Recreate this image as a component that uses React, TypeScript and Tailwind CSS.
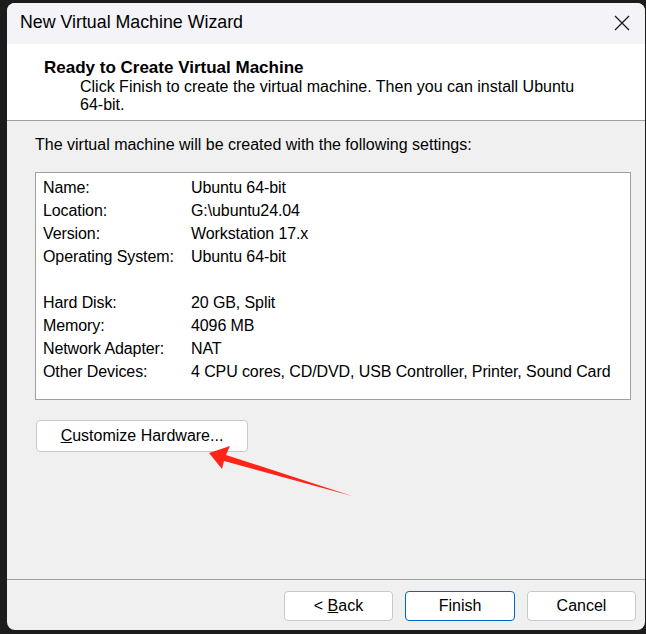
import React from "react";

const font = { fontFamily: '"Liberation Sans", Arial, sans-serif' };

const rows: [string, string][] = [
  ["Name:", "Ubuntu 64-bit"],
  ["Location:", "G:\\ubuntu24.04"],
  ["Version:", "Workstation 17.x"],
  ["Operating System:", "Ubuntu 64-bit"],
  ["", ""],
  ["Hard Disk:", "20 GB, Split"],
  ["Memory:", "4096 MB"],
  ["Network Adapter:", "NAT"],
  ["Other Devices:", "4 CPU cores, CD/DVD, USB Controller, Printer, Sound Card"],
];

export default function App() {
  return (
    <div
      className="relative w-[646px] h-[634px] bg-[#1c1c1c] overflow-hidden text-[#000]"
      style={font}
    >
      <div className="ml-[7px] mt-[3px] w-[638px] h-[627px] rounded-[8px] bg-[#f0f0f0] flex flex-col overflow-hidden">
        {/* Title bar */}
        <div className="h-[41px] shrink-0 bg-[#f3f3f8] flex items-center justify-between pl-[13px] pr-[14px]">
          <span className="text-[17.8px] leading-none pb-[1px]">New Virtual Machine Wizard</span>
          <svg width="18" height="18" viewBox="0 0 18 18" className="mt-[-1px]">
            <path d="M2 2 L16 16 M16 2 L2 16" stroke="#1a1a1a" strokeWidth="1.3" fill="none" />
          </svg>
        </div>
        {/* Header */}
        <div className="h-[77px] shrink-0 bg-white border-b border-[#a0a0a0] pl-[37px] pt-[13px]">
          <div className="text-[17px] font-bold leading-[21px]">Ready to Create Virtual Machine</div>
          <div className="pl-[36px] w-[540px] text-[16px] leading-[18px]">
            Click Finish to create the virtual machine. Then you can install Ubuntu 64-bit.
          </div>
        </div>
        {/* Body */}
        <div className="flex-1 flex flex-col pl-[28px] pr-[7px]">
          <div className="mt-[15px] text-[16px] leading-[18px]">
            The virtual machine will be created with the following settings:
          </div>
          <div className="mt-[18px] w-[596px] h-[228px] bg-white border border-[#a0a0a0] pl-[7px] pt-[3px]">
            {rows.map(([k, v], i) => (
              <div key={i} className="flex h-[23px] items-center text-[16px] tracking-[-0.1px]">
                <span className="w-[148px] shrink-0">{k}</span>
                <span className="whitespace-nowrap">{v}</span>
              </div>
            ))}
          </div>
          <button className="mt-[20px] ml-[1px] w-[212px] h-[32px] bg-white border border-[#c8c8c8] rounded-[4px] text-[16px] flex items-center justify-center">
            <span>
              <span className="underline">C</span>ustomize Hardware...
            </span>
          </button>
        </div>
        {/* Footer */}
        <div className="h-[51px] shrink-0 border-t border-[#a0a0a0] flex items-start justify-end gap-[12px] pt-[11px] pr-[9px]">
          <button className="w-[109px] h-[30px] bg-white border border-[#c8c8c8] rounded-[4px] text-[16px]">
            &lt; <span className="underline">B</span>ack
          </button>
          <button className="w-[110px] h-[30px] bg-white border border-[#0067c0] rounded-[4px] text-[16px]">
            Finish
          </button>
          <button className="w-[109px] h-[30px] bg-white border border-[#c8c8c8] rounded-[4px] text-[16px]">
            Cancel
          </button>
        </div>
      </div>
      {/* Red annotation arrow */}
      <svg className="absolute left-0 top-0 pointer-events-none" width="646" height="634">
        <path d="M209 453 L230 446 L226 455 L352 496 L224 461 L222 469 Z" fill="#ff2418" />
      </svg>
    </div>
  );
}
